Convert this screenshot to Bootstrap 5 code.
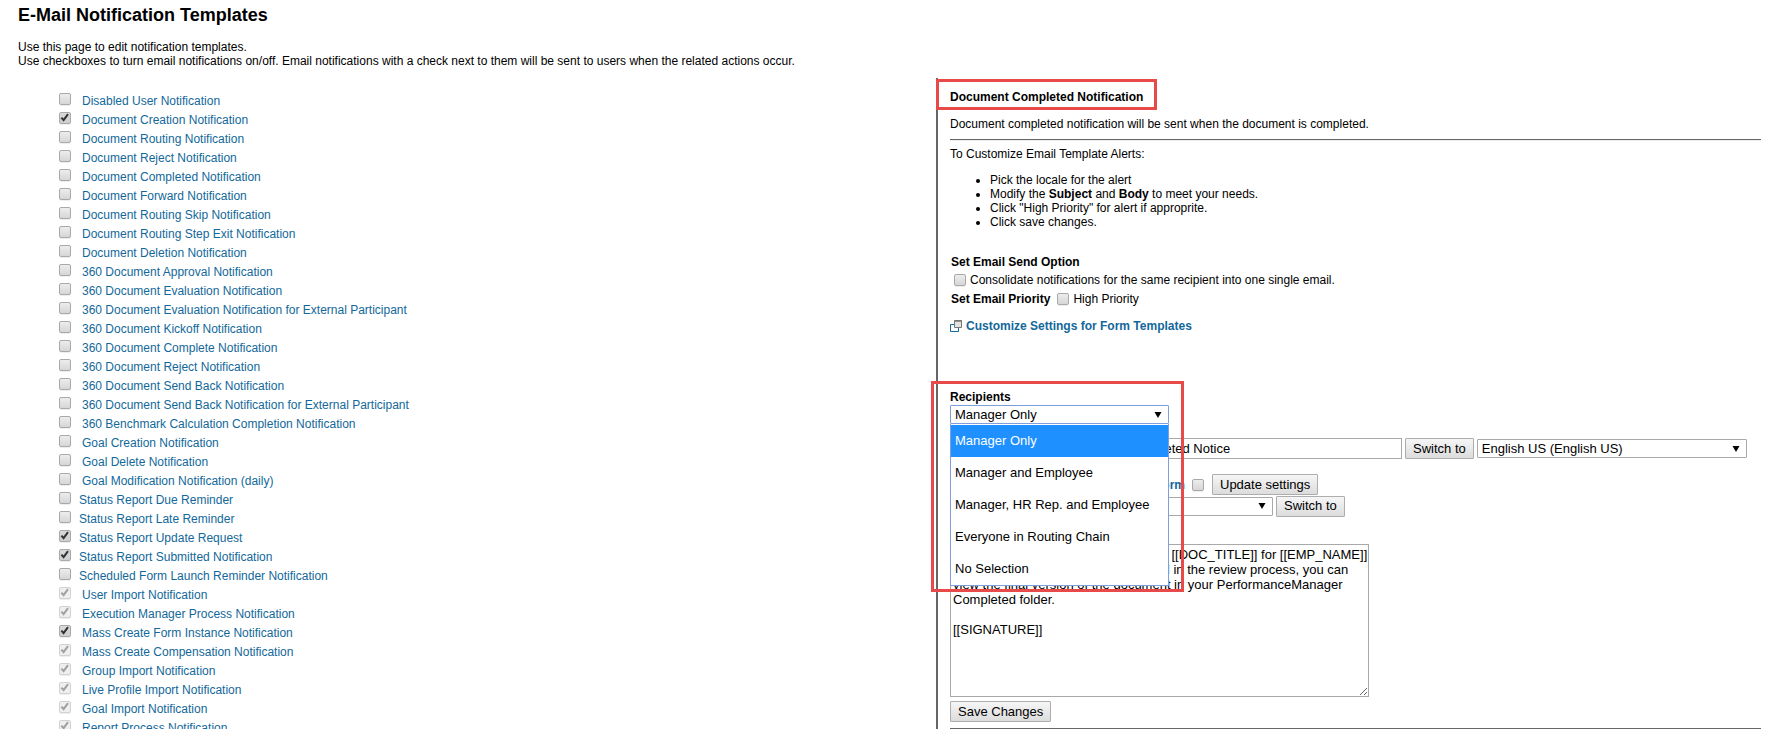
<!DOCTYPE html>
<html lang="en"><head><meta charset="utf-8"><title>E-Mail Notification Templates</title>
<link href="https://cdn.jsdelivr.net/npm/bootstrap@5.3.0/dist/css/bootstrap.min.css" rel="stylesheet">
<style>
html,body{height:729px;overflow:hidden;background:#fff}
body{font:12px/14px "Liberation Sans",Arial,sans-serif;color:#000}
.page-ttl{font-size:18px;line-height:22px;font-weight:700;margin:4px 0 0 18px;height:22px}
.intro{margin:14px 0 0 18px;height:38px}
.shell{height:651px}
.left-col{width:936px;flex:none;padding:14px 0 0 59px;overflow:hidden}
.right-col{flex:1;border-left:2px solid #666;padding-left:12px;padding-right:21px;position:relative;height:651px}
.nrow{height:19px;line-height:19px;display:flex;align-items:flex-start}
.nrow a{margin-left:11px;color:#12689a;text-decoration:none;white-space:nowrap}
.nrow.tight a{margin-left:8px}
.cb{appearance:none;-webkit-appearance:none;width:12px;height:12px;border:1px solid #a9a9a9;border-radius:2px;margin:1px 0 0;background:linear-gradient(#ededed,#d6d6d6);flex:none;display:inline-block;box-shadow:0 1px 0 #eee;vertical-align:middle}
.cb:checked{background:url("data:image/svg+xml,%3Csvg xmlns='http://www.w3.org/2000/svg' viewBox='0 0 12 12'%3E%3Cpath d='M2.4 5.6 4.6 8.2 9 2.2' fill='none' stroke='%23333' stroke-width='2'/%3E%3C/svg%3E") center/12px 12px no-repeat,linear-gradient(#d9d9d9,#cfcfcf)}
.cb:disabled{border-color:#d2d2d2;background:url("data:image/svg+xml,%3Csvg xmlns='http://www.w3.org/2000/svg' viewBox='0 0 12 12'%3E%3Cpath d='M2.4 5.6 4.6 8.2 9 2.2' fill='none' stroke='%23a0a0a0' stroke-width='2'/%3E%3C/svg%3E") center/12px 12px no-repeat,#efefef}
.doc-ttl{font-weight:700;padding-top:12px;height:39px}
.rule{border:0;border-top:1px solid #666;border-bottom:1px solid #eee;opacity:1;margin:0;height:2px}
.cust-intro{margin-top:6px}
.steps{margin:12px 0 0;padding-left:40px;height:56px}
.blk-ttl{font-weight:700;padding-left:1px}
.send-ttl{margin-top:26px}
.opt{display:flex;align-items:flex-start;height:19px;line-height:19px}
.opt .cb{margin-top:3px}
.opt-a{margin-top:2px;padding-left:4px}
.opt-a .cb{margin-right:4px}
.opt-b{padding-left:1px}
.opt-b b{margin-right:7px}
.opt-b .cb{margin-right:4px}
.cust{display:flex;align-items:center;color:#12689a;font-weight:700;text-decoration:none;margin-top:10px;height:14px}
.cust svg{margin-right:4px;flex:none}
.recip-ttl{margin:57px 0 1px;padding-left:0}
.ctrl{font:13px/15px "Liberation Sans",Arial,sans-serif;color:#000}
.txt{border:1px solid #a9a9a9;height:21px;padding:1px 2px;background:#fff;outline:0;box-sizing:border-box;width:341px}
.sel{appearance:none;-webkit-appearance:none;border:1px solid #a9a9a9;border-radius:1px;height:19px;padding:0 18px 0 4px;box-sizing:border-box;outline:0;background:#fff url("data:image/svg+xml,%3Csvg xmlns='http://www.w3.org/2000/svg' viewBox='0 0 8 6'%3E%3Cpath d='M.5 0h7L4 6z' fill='%23000'/%3E%3C/svg%3E") right 6px center/8px 6px no-repeat}
.sel-loc{width:270px}
.sel-tpl{width:323px}
.xbtn{border:1px solid #adadad;border-radius:1px;background:linear-gradient(#f6f6f6,#dcdcdc);padding:0 7px;height:21px;font:13px/18px "Liberation Sans",Arial,sans-serif;color:#000;white-space:nowrap}
.recip{width:219px;position:relative;z-index:3}
.recip .sel{width:219px;display:block;border-color:#7f9fdc}
.menu{position:absolute;left:0;top:19px;width:219px;background:#fff;border:1px solid #7f9fdc;border-top:0;padding-top:1px;border-radius:0;z-index:3}
.menu .list-group-item{border:0;border-radius:0;height:32px;padding:0 4px;font:13px/31px "Liberation Sans",Arial,sans-serif;color:#000;background:#fff}
.menu .list-group-item.active{background:#1e90ff;color:#fff}
.ln-subj{margin-top:14px;gap:3px;height:21px}
.subj-lbl{width:108px;flex:none}
.ln-form{margin-top:15px;height:21px;gap:7px}
.ln-form .cb{margin:0 1px 0 0}
.form-lbl{width:235px;text-align:right;color:#12689a;font-weight:700;white-space:nowrap}
.ln-tpl{height:22px;gap:3px}
.tarea{display:block;width:419px;height:153px;border:1px solid #a9a9a9;padding:2px;margin-top:27px;resize:both;overflow:hidden;white-space:pre;outline:0;border-radius:0}
.save-btn{margin-top:4px;display:block}
.end-rule{margin-top:6px}
.mark-box{position:absolute;border:3px solid #e84a4a;pointer-events:none;z-index:5}
.box-a{left:-2px;top:1px;width:221px;height:31px}
.box-b{left:-7px;top:303px;width:253px;height:211px}
</style></head>
<body>
<h1 class="page-ttl">E-Mail Notification Templates</h1>
<p class="intro">Use this page to edit notification templates.<br>Use checkboxes to turn email notifications on/off. Email notifications with a check next to them will be sent to users when the related actions occur.</p>
<div class="shell d-flex">
<div class="left-col" id="list"></div>
<div class="right-col">
<div class="mark-box box-a"></div>
<div class="mark-box box-b"></div>
<div class="doc-ttl">Document Completed Notification</div>
<div>Document completed notification will be sent when the document is completed.</div>
<hr class="rule mt-2">
<div class="cust-intro">To Customize Email Template Alerts:</div>
<ul class="steps">
<li>Pick the locale for the alert</li>
<li>Modify the <b>Subject</b> and <b>Body</b> to meet your needs.</li>
<li>Click "High Priority" for alert if approprite.</li>
<li>Click save changes.</li>
</ul>
<div class="blk-ttl send-ttl">Set Email Send Option</div>
<div class="opt opt-a"><input type="checkbox" class="cb"><span>Consolidate notifications for the same recipient into one single email.</span></div>
<div class="opt opt-b"><b>Set Email Priority</b><input type="checkbox" class="cb"><span>High Priority</span></div>
<a href="#" class="cust"><svg width="12" height="12" viewBox="0 0 12 12" fill="none"><path d="M.5 4.5h8v7h-8z" fill="#fff" stroke="#12689a"/><path d="M4.5.5h7v7h-7z" fill="#e2e2e2" stroke="#777"/><path d="M4.5 1h7" stroke="#777" stroke-width="1.5"/></svg>Customize Settings for Form Templates</a>
<div class="blk-ttl recip-ttl">Recipients</div>
<div class="recip">
<select class="sel ctrl"><option>Manager Only</option></select>
<div class="menu list-group">
<div class="list-group-item active">Manager Only</div>
<div class="list-group-item">Manager and Employee</div>
<div class="list-group-item">Manager, HR Rep. and Employee</div>
<div class="list-group-item">Everyone in Routing Chain</div>
<div class="list-group-item">No Selection</div>
</div>
</div>
<div class="d-flex align-items-center ln-subj">
<span class="subj-lbl">Subject</span>
<input class="txt ctrl" value="Document Completed Notice">
<button class="btn xbtn" type="button">Switch to</button>
<select class="sel ctrl sel-loc"><option>English US (English US)</option></select>
</div>
<div class="d-flex align-items-center ln-form">
<span class="form-lbl">Use this template for this form</span>
<input type="checkbox" class="cb">
<button class="btn xbtn" type="button">Update settings</button>
</div>
<div class="d-flex align-items-center ln-tpl">
<select class="sel ctrl sel-tpl"><option>Default template</option></select>
<button class="btn xbtn" type="button">Switch to</button>
</div>
<textarea class="tarea ctrl" spellcheck="false">You are all receiving this notice about [[DOC_TITLE]] for [[EMP_NAME]]
Since you all have also been involved in the review process, you can
view the final version of the document in your PerformanceManager
Completed folder.

[[SIGNATURE]]</textarea>
<button class="btn xbtn save-btn" type="button">Save Changes</button>
<hr class="rule end-rule">
</div>
</div>
<script>
var rows=[["Disabled User Notification",0],["Document Creation Notification",1],["Document Routing Notification",0],["Document Reject Notification",0],["Document Completed Notification",0],["Document Forward Notification",0],["Document Routing Skip Notification",0],["Document Routing Step Exit Notification",0],["Document Deletion Notification",0],["360 Document Approval Notification",0],["360 Document Evaluation Notification",0],["360 Document Evaluation Notification for External Participant",0],["360 Document Kickoff Notification",0],["360 Document Complete Notification",0],["360 Document Reject Notification",0],["360 Document Send Back Notification",0],["360 Document Send Back Notification for External Participant",0],["360 Benchmark Calculation Completion Notification",0],["Goal Creation Notification",0],["Goal Delete Notification",0],["Goal Modification Notification (daily)",0],["Status Report Due Reminder",0,1],["Status Report Late Reminder",0,1],["Status Report Update Request",1,1],["Status Report Submitted Notification",1,1],["Scheduled Form Launch Reminder Notification",0,1],["User Import Notification",2],["Execution Manager Process Notification",2],["Mass Create Form Instance Notification",1],["Mass Create Compensation Notification",2],["Group Import Notification",2],["Live Profile Import Notification",2],["Goal Import Notification",2],["Report Process Notification",2]];
document.getElementById('list').innerHTML=rows.map(function(r){return '<div class="nrow'+(r[2]?' tight':'')+'"><input type="checkbox" class="cb"'+(r[1]?' checked':'')+(r[1]==2?' disabled':'')+'><a href="#">'+r[0]+'</a></div>';}).join('');
</script>
<script src="https://cdn.jsdelivr.net/npm/bootstrap@5.3.0/dist/js/bootstrap.bundle.min.js"></script>
</body></html>
